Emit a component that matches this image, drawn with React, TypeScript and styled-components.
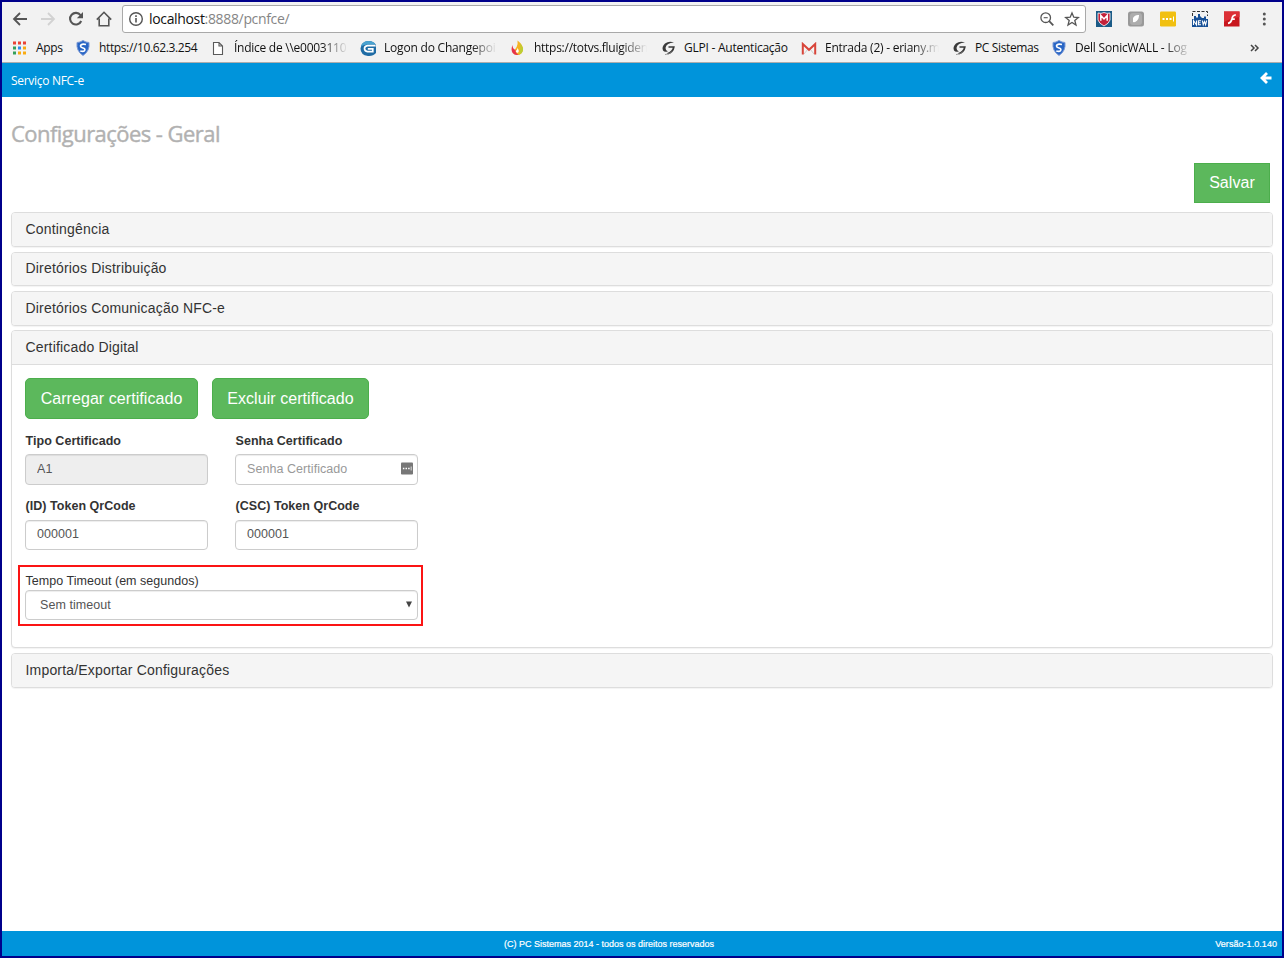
import React from "react";
import styled, { createGlobalStyle } from "styled-components";

const GlobalStyle = createGlobalStyle`
  * { box-sizing: border-box; }
  body { margin: 0; background: #fff; }
  input, select, button { font-family: inherit; margin: 0; }
`;

const Window = styled.div`
  width: 1284px;
  height: 958px;
  border: 2px solid #00008b;
  background: #fff;
  display: flex;
  flex-direction: column;
  font-family: "Liberation Sans", Arial, sans-serif;
  color: #333;
  overflow: hidden;
`;

const Chrome = styled.div`
  height: 61px;
  flex: none;
  background: #f2f2f2;
  border-bottom: 1px solid #adadad;
  font-family: "Open Sans", sans-serif;
`;

const Toolbar = styled.div`
  height: 32px;
  padding: 2px 10px 0;
  display: flex;
  align-items: center;
`;

const NavIcons = styled.div`
  display: flex;
  gap: 12px;
  width: 110px;
  svg { display: block; }
`;

const AddressBar = styled.div`
  width: 964px;
  height: 28px;
  border: 1px solid #a9a9a9;
  border-radius: 3px;
  background: #fff;
  display: flex;
  align-items: center;
  padding: 0 5px;
`;

const Url = styled.div`
  flex: 1;
  margin-left: 5px;
  font-size: 14px;
  line-height: 20px;
  letter-spacing: -0.34px;
  color: #858585;
  b { font-weight: 400; color: #111; }
`;

const AddressIcons = styled.div`
  display: flex;
  gap: 9px;
`;

const Extensions = styled.div`
  display: flex;
  gap: 16px;
  margin-left: 10px;
  svg { display: block; }
`;

const Bookmarks = styled.div`
  height: 28px;
  display: flex;
  align-items: center;
  padding: 0 0 0 9px;
`;

const Bookmark = styled.div<{ $w: number }>`
  width: ${(p) => p.$w}px;
  flex: none;
  display: flex;
  align-items: center;
  svg { display: block; flex: none; }
`;

const BookmarkText = styled.span<{ $gap: number; $max?: number; $ls: number }>`
  margin-left: ${(p) => p.$gap}px;
  font-size: 12px;
  line-height: 18px;
  letter-spacing: ${(p) => p.$ls}px;
  color: #111;
  white-space: nowrap;
  ${(p) =>
    p.$max
      ? `width: ${p.$max}px; mask-image: linear-gradient(to right, #000 ${p.$max - 26}px, transparent);`
      : ""}
`;

const Header = styled.header`
  height: 34px;
  flex: none;
  background: #0094db;
  color: #fff;
  display: flex;
  justify-content: space-between;
  padding: 0 10px 0 9px;
  font: 12px/35px "Open Sans", sans-serif;
  letter-spacing: -0.3px;
  svg { margin-top: 9px; display: block; }
`;

const Main = styled.main`
  flex: 1;
  padding: 0 9px;
`;

const Title = styled.h1`
  margin: 0;
  height: 66px;
  padding-top: 19px;
  font: 400 22px/34px "Open Sans", sans-serif;
  letter-spacing: -0.55px;
  color: #b1b1b1;
  -webkit-text-stroke: 0.4px #b1b1b1;
`;

const Actions = styled.div`
  display: flex;
  justify-content: flex-end;
  padding-right: 3px;
  height: 49px;
`;

const Button = styled.button<{ $w: number; $square?: boolean }>`
  width: ${(p) => p.$w}px;
  height: ${(p) => (p.$square ? 40 : 41)}px;
  padding: 0;
  border: 1px solid #4cae4c;
  border-radius: ${(p) => (p.$square ? 0 : 5)}px;
  background: #5cb85c;
  color: #fff;
  font-size: 16px;
  letter-spacing: 0.06px;
`;

const Panels = styled.div`
  display: flex;
  flex-direction: column;
`;

const Panel = styled.section<{ $h: number; $mb: number }>`
  height: ${(p) => p.$h}px;
  margin-bottom: ${(p) => p.$mb}px;
  width: 1262px;
  border: 1px solid #ddd;
  border-radius: 4px;
  background: #fff;
  box-shadow: 0 1px 1px rgba(0, 0, 0, 0.05);
  overflow: hidden;
`;

const PanelTitle = styled.h2<{ $open?: boolean; $lh?: number }>`
  margin: 0;
  height: ${(p) => (p.$open ? "34px" : "100%")};
  padding-left: 13.5px;
  background: #f5f5f5;
  ${(p) => (p.$open ? "border-bottom: 1px solid #ddd;" : "")}
  font-size: 14px;
  font-weight: 400;
  line-height: ${(p) => p.$lh ?? 32}px;
  letter-spacing: 0.18px;
`;

const PanelBody = styled.div`
  padding: 13px;
`;

const ButtonRow = styled.div`
  display: flex;
  gap: 14px;
  margin-bottom: 11px;
`;

const FieldRow = styled.div<{ $mb: number }>`
  display: grid;
  grid-template-columns: 183px 183px;
  column-gap: 27px;
  margin-bottom: ${(p) => p.$mb}px;
`;

const Label = styled.label<{ $h?: number }>`
  display: block;
  height: ${(p) => p.$h ?? 24}px;
  line-height: 23px;
  padding-left: 0.6px;
  font-size: 12.5px;
  font-weight: 700;
  letter-spacing: 0.03px;
`;

const InputBox = styled.div<{ $disabled?: boolean; $h: number }>`
  height: ${(p) => p.$h}px;
  border: 1px solid #ccc;
  border-radius: 4px;
  background: ${(p) => (p.$disabled ? "#eee" : "#fff")};
  box-shadow: inset 0 1px 1px rgba(0, 0, 0, 0.075);
  display: flex;
  align-items: center;
  padding: 0 4px 0 11px;
  svg { margin-bottom: 3px; }
`;

const Input = styled.input`
  flex: 1;
  min-width: 0;
  height: 26px;
  padding: 0 0 2px;
  border: 0;
  outline: 0;
  background: transparent;
  color: #555;
  font-size: 12.5px;
  letter-spacing: 0.06px;
  &::placeholder { color: #999; opacity: 1; }
`;

const Highlight = styled.div`
  width: 405px;
  height: 61px;
  margin-left: -7px;
  padding: 5px 3px 0 5px;
  border: 2px solid #fb1414;
`;

const TimeoutLabel = styled(Label)`
  height: 18px;
  line-height: 18px;
  font-weight: 400;
`;

const Select = styled.div`
  width: 393px;
  height: 30px;
  border: 1px solid #ccc;
  border-radius: 4px;
  box-shadow: inset 0 1px 1px rgba(0, 0, 0, 0.075);
  display: flex;
  justify-content: space-between;
  align-items: center;
  padding: 0 5px 1px 14px;
  font-size: 12.5px;
  letter-spacing: 0.06px;
  color: #555;
`;

const Footer = styled.footer`
  height: 25px;
  flex: none;
  background: #0094db;
  color: #fff;
  display: flex;
  justify-content: space-between;
  padding: 0 5px 0 502px;
  font-size: 9px;
  line-height: 26px;
  -webkit-text-stroke: 0.2px #fff;
`;

const Version = styled.span`
  letter-spacing: 0.05px;
`;

const Shield = () => (
  <svg width="14" height="16" viewBox="0 0 14 16">
    <path d="M1 2.5 Q4 2.5 7 .5 Q10 2.5 13 2.5 Q14 11 7 15.5 Q0 11 1 2.5Z" fill="#2865c5" stroke="#7d9bd6" />
    <path d="M10 4.5 Q5 3.5 4.5 6 Q4.6 7.5 7 8 Q9.5 8.6 8.6 10.4 Q7.5 12 4.3 11" fill="none" stroke="#fff" strokeWidth="1.7" />
  </svg>
);

const GlpiIcon = () => (
  <svg width="15" height="16" viewBox="0 0 15 16">
    <path d="M13 2.6 Q8 .6 4 3.6 Q.4 7 2 10.4 Q3.6 12.6 7 11.2 Q4.4 10.4 4.6 7.4 Q5.5 3.4 13 2.6Z" fill="#3a3a3a" />
    <path d="M7.5 7 H12.8 Q12 12 6.5 13.8" fill="none" stroke="#3a3a3a" strokeWidth="1.7" />
    <path d="M4 14.6 Q9 14 11.5 11.5" fill="none" stroke="#888" strokeWidth=".8" />
  </svg>
);

const AppsIcon = () => {
  const colors = ["#ea4335", "#ea4335", "#ea4335", "#34a05a", "#2d8cf0", "#f9ab12", "#34a05a", "#f9ab12", "#f9ab12"];
  return (
    <svg width="15" height="14" viewBox="0 0 15 14">
      {colors.map((c, i) => (
        <rect key={i} x={2 + (i % 3) * 5} y={0.5 + Math.floor(i / 3) * 5} width="3" height="3" fill={c} />
      ))}
    </svg>
  );
};

const PageIcon = () => (
  <svg width="12" height="15" viewBox="0 0 12 15" fill="#fff" stroke="#5a5a5a" strokeWidth="1.1">
    <path d="M1.5 1.5H7L10.5 5V13.5H1.5Z M7 1.5V5H10.5" />
  </svg>
);

const ChangepointIcon = () => (
  <svg width="17" height="17" viewBox="0 0 17 17">
    <path d="M8 1Q13 .5 15.8 4.5V7H16V13Q13 16.5 8 16Q.5 15 .5 8.5Q1 1.5 8 1Z" fill="#1f6ca5" />
    <path d="M1 6.5Q2.5 1 8.5 1Q13.5 1 15.5 4.5H7Q3 5 1 6.5Z" fill="#4aa3d0" />
    <path d="M15.5 5.6H7.5Q4.5 5.9 4.5 8.6T7.5 11.7H12.8V8.8H7.8" fill="none" stroke="#fff" strokeWidth="1.7" />
  </svg>
);

const FluigIcon = () => (
  <svg width="13" height="16" viewBox="0 0 13 16">
    <path d="M6.5 .5Q12.5 5 12 10Q11 15 6.5 15Q3 15 1.5 12Q7.5 7 6.5 .5Z" fill="#f5b323" />
    <path d="M8.5 3Q12.8 7 11.8 11Q11 14 8 14.8Q10.8 8 8.5 3Z" fill="#b9cf35" />
    <path d="M1.5 5Q-.5 10 1.7 13Q4 15.8 8 14.6Q4.5 13.5 4.5 10Q1.5 9 1.5 5Z" fill="#e8334a" />
    <path d="M6.5 8Q8.8 11 7 12.7Q5 13 4.7 11Q6.5 10 6.5 8Z" fill="#fff" />
  </svg>
);

const GmailIcon = () => (
  <svg width="16" height="13" viewBox="0 0 16 13">
    <rect x="1" y="1" width="14" height="11.5" fill="#f4f4f4" />
    <path d="M3 12L7 7M13 12L9 7" stroke="#ccc" />
    <path d="M1.8 12.5V2L8 7.8L14.2 2V12.5" fill="none" stroke="#d8453a" strokeWidth="2" />
  </svg>
);

const ManagerIcon = ({ bg, w, h }: { bg: string; w: number; h: number }) => (
  <svg width={w} height={h} viewBox="0 0 16 16" preserveAspectRatio="none">
    <rect y=".5" width="16" height="15" rx="1.2" fill={bg} />
    <path d="M2.5 7h2v2h-2zM6 7h2v2H6zM9.5 7h2v2h-2zM13 5.5h1v5h-1z" fill="#fff" />
  </svg>
);

const bookmarks = [
  { icon: <AppsIcon />, text: "Apps", w: 65, gap: 10, ls: -0.3 },
  { icon: <Shield />, text: "https://10.62.3.254", w: 136, gap: 9, ls: -0.37 },
  { icon: <PageIcon />, text: "Índice de \\\\e0003110", w: 148, gap: 10, ls: -0.26, max: 114 },
  { icon: <ChangepointIcon />, text: "Logon do Changepoi", w: 151, gap: 7, ls: -0.2, max: 113 },
  { icon: <FluigIcon />, text: "https://totvs.fluigiden", w: 150, gap: 10, ls: -0.27, max: 113 },
  { icon: <GlpiIcon />, text: "GLPI - Autenticação", w: 140, gap: 8, ls: -0.24 },
  { icon: <GmailIcon />, text: "Entrada (2) - eriany.m", w: 151, gap: 8, ls: -0.24, max: 114 },
  { icon: <GlpiIcon />, text: "PC Sistemas", w: 100, gap: 8, ls: -0.37 },
  { icon: <Shield />, text: "Dell SonicWALL - Log", w: 198, gap: 9, ls: -0.2, max: 116 },
];

export default function App() {
  return (
    <>
      <GlobalStyle />
      <Window>
        <Chrome>
          <Toolbar>
            <NavIcons>
              <svg width="16" height="16" viewBox="0 0 16 16" fill="none" stroke="#555" strokeWidth="1.8"><path d="M15 8H2.5M8 2L2 8L8 14" /></svg>
              <svg width="16" height="16" viewBox="0 0 16 16" fill="none" stroke="#d2d2d2" strokeWidth="1.8"><path d="M1 8H13.5M8 2L14 8L8 14" /></svg>
              <svg width="16" height="16" viewBox="0 0 16 16"><path d="M13.2 10A5.8 5.8 0 1 1 12.5 4.2" fill="none" stroke="#555" strokeWidth="2.1" /><path d="M15 1V7.2H8.8Z" fill="#555" /></svg>
              <svg width="16" height="16" viewBox="0 0 16 16" fill="none" stroke="#555" strokeWidth="1.6"><path d="M.8 8.6L8 1.3L15.2 8.6M3.2 7.5V14.7H12.8V7.5" /></svg>
            </NavIcons>
            <AddressBar>
              <svg width="16" height="16" viewBox="0 0 16 16"><circle cx="8" cy="8" r="6.3" fill="none" stroke="#555" strokeWidth="1.4" /><path d="M7.2 7h1.6v4.5H7.2zM7.2 4.3h1.6v1.6H7.2z" fill="#555" /></svg>
              <Url><b>localhost</b>:8888/pcnfce/</Url>
              <AddressIcons>
                <svg width="16" height="16" viewBox="0 0 16 16" fill="none" stroke="#555" strokeWidth="1.3"><circle cx="6.7" cy="6.7" r="4.8" /><path d="M10.2 10.2L14.3 14.3" strokeWidth="1.8" /><path d="M4.7 6.7H8.7" strokeWidth="1.1" /></svg>
                <svg width="16" height="16" viewBox="0 0 16 16" fill="none" stroke="#555" strokeWidth="1.3"><path d="M8 2L9.8 6.2L14.3 6.5L10.8 9.4L12 14L8 11.5L4 14L5.2 9.4L1.7 6.5L6.2 6.2Z" /></svg>
              </AddressIcons>
            </AddressBar>
            <Extensions>
              <svg width="16" height="16" viewBox="0 0 16 16"><rect width="16" height="16" fill="#1b5b87" /><path d="M2 2Q5 3 8 1.5Q11 3 14 2V9Q13 12.5 8 15Q3 12.5 2 9Z" fill="#c4213a" stroke="#fff" strokeWidth=".8" /><path d="M4.8 9.8V4.5L8 8L11.2 4.5V9.8" fill="none" stroke="#fff" strokeWidth="1.5" /></svg>
              <svg width="16" height="16" viewBox="0 0 16 16"><rect y=".5" width="16" height="15" rx="2.5" fill="#999" /><rect x="2" y="2" width="12" height="12" rx="3" fill="#adadad" /><path d="M5 7Q7 3.5 11 4Q11 8.5 8 10.5Q6.5 11.5 5 11Z" fill="#fff" /></svg>
              <ManagerIcon bg="#f1c011" w={16} h={16} />
              <svg width="16" height="16" viewBox="0 0 16 16"><path d="M.5 5V.5H15.5V5" fill="none" stroke="#333" strokeDasharray="3 1.5" /><path d="M0 8H2V5H4V6.5H6V3H8V5L10 7H12V5.5H14V8H16V16H0Z" fill="#164f96" /><path d="M1.5 14V9.5L4.5 14V9.5M9 9.8H6.4V13.8H9M6.4 11.8H8.6M10.3 9.5L11.2 13.6L12.4 10.5L13.6 13.6L14.6 9.5" fill="none" stroke="#fff" strokeWidth="1.1" /></svg>
              <svg width="16" height="16" viewBox="0 0 16 16"><rect y=".5" width="15.5" height="15" fill="#c8171e" /><path d="M0 .5H15.5V6Q7 7 0 11Z" fill="#dc3036" /><path d="M11.8 3.8Q8.6 4 8 7.7Q7 11.8 4 12.3M7.3 8.2H10.8" fill="none" stroke="#fff" strokeWidth="1.8" /></svg>
              <svg width="16" height="16" viewBox="0 0 16 16" fill="#555"><circle cx="8.3" cy="3" r="1.5" /><circle cx="8.3" cy="8" r="1.5" /><circle cx="8.3" cy="13" r="1.5" /></svg>
            </Extensions>
          </Toolbar>
          <Bookmarks>
            {bookmarks.map((b) => (
              <Bookmark key={b.text} $w={b.w}>
                {b.icon}
                <BookmarkText $gap={b.gap} $max={b.max} $ls={b.ls}>{b.text}</BookmarkText>
              </Bookmark>
            ))}
            <svg width="10" height="8" viewBox="0 0 10 8" fill="none" stroke="#444" strokeWidth="1.5"><path d="M1 1L4 4L1 7M5 1L8 4L5 7" /></svg>
          </Bookmarks>
        </Chrome>
        <Header>
          <span>Serviço NFC-e</span>
          <svg width="12" height="12" viewBox="0 0 12 12" fill="none" stroke="#fff" strokeWidth="2.8"><path d="M11.5 6H3M7 1L2 6L7 11" /></svg>
        </Header>
        <Main>
          <Title>Configurações - Geral</Title>
          <Actions><Button $w={76} $square>Salvar</Button></Actions>
          <Panels>
            <Panel $h={35} $mb={5}><PanelTitle>Contingência</PanelTitle></Panel>
            <Panel $h={34} $mb={5}><PanelTitle $lh={30}>Diretórios Distribuição</PanelTitle></Panel>
            <Panel $h={35} $mb={4}><PanelTitle>Diretórios Comunicação NFC-e</PanelTitle></Panel>
            <Panel $h={318} $mb={5}>
              <PanelTitle $open>Certificado Digital</PanelTitle>
              <PanelBody>
                <ButtonRow>
                  <Button $w={173}>Carregar certificado</Button>
                  <Button $w={157}>Excluir certificado</Button>
                </ButtonRow>
                <FieldRow $mb={10}>
                  <div>
                    <Label>Tipo Certificado</Label>
                    <InputBox $disabled $h={31}><Input defaultValue="A1" readOnly /></InputBox>
                  </div>
                  <div>
                    <Label>Senha Certificado</Label>
                    <InputBox $h={31}>
                      <Input placeholder="Senha Certificado" />
                      <ManagerIcon bg="#777" w={12} h={13} />
                    </InputBox>
                  </div>
                </FieldRow>
                <FieldRow $mb={15}>
                  <div>
                    <Label $h={25}>(ID) Token QrCode</Label>
                    <InputBox $h={30}><Input defaultValue="000001" /></InputBox>
                  </div>
                  <div>
                    <Label $h={25}>(CSC) Token QrCode</Label>
                    <InputBox $h={30}><Input defaultValue="000001" /></InputBox>
                  </div>
                </FieldRow>
                <Highlight>
                  <TimeoutLabel>Tempo Timeout (em segundos)</TimeoutLabel>
                  <Select>
                    <span>Sem timeout</span>
                    <svg width="6" height="7" viewBox="0 0 6 7"><path d="M0 .5H6L3 6.5Z" fill="#444" /></svg>
                  </Select>
                </Highlight>
              </PanelBody>
            </Panel>
            <Panel $h={35} $mb={0}><PanelTitle>Importa/Exportar Configurações</PanelTitle></Panel>
          </Panels>
        </Main>
        <Footer>
          <span>(C) PC Sistemas 2014 - todos os direitos reservados</span>
          <Version>Versão-1.0.140</Version>
        </Footer>
      </Window>
    </>
  );
}
